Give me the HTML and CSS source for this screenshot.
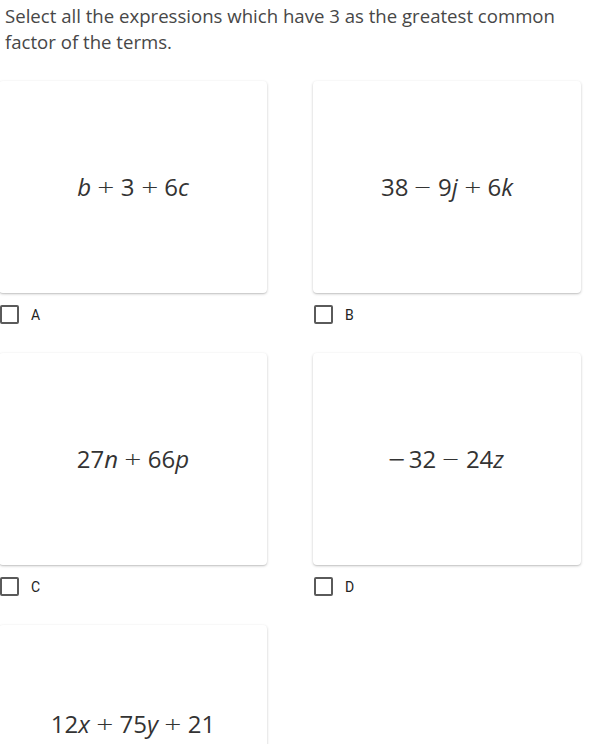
FILE: index.html
```html
<!DOCTYPE html>
<html>
<head>
<meta charset="utf-8">
<link rel="stylesheet" href="styles.css">
</head>
<body>
<div class="page">
  <p class="prompt">Select all the expressions which have 3 as the greatest common factor of the terms.</p>
  <div class="choices">
    <div class="choice">
      <div class="card"><span class="math"><i>b</i><span class="op">+</span>3<span class="op">+</span>6<i>c</i></span></div>
      <label class="opt"><span class="box"></span><span class="letter">A</span></label>
    </div>
    <div class="choice">
      <div class="card"><span class="math">38<span class="op">−</span>9<i>j</i><span class="op">+</span>6<i>k</i></span></div>
      <label class="opt"><span class="box"></span><span class="letter">B</span></label>
    </div>
    <div class="choice">
      <div class="card"><span class="math">27<i>n</i><span class="op">+</span>66<i>p</i></span></div>
      <label class="opt"><span class="box"></span><span class="letter">C</span></label>
    </div>
    <div class="choice">
      <div class="card"><span class="math"><span class="neg">−</span>32<span class="op">−</span>24<i>z</i></span></div>
      <label class="opt"><span class="box"></span><span class="letter">D</span></label>
    </div>
    <div class="choice">
      <div class="card card-last"><span class="math">12<i>x</i><span class="op">+</span>75<i>y</i><span class="op">+</span>21</span></div>
      <label class="opt"><span class="box"></span><span class="letter">E</span></label>
    </div>
  </div>
</div>
</body>
</html>
```
FILE: styles.css
```css
html, body {
  margin: 0;
  padding: 0;
  background: #fff;
}
.page {
  width: 596px;
  height: 744px;
  overflow: hidden;
}
.prompt {
  margin: 0;
  padding: 3px 20px 0 5px;
  font-family: "Open Sans", sans-serif;
  font-size: 18.6px;
  line-height: 26px;
  color: #474747;
}
.choices {
  display: grid;
  grid-template-columns: 268px 268px;
  column-gap: 46px;
  row-gap: 29px;
  margin-top: 26px;
  margin-left: -1px;
}
.choice {
  display: flex;
  flex-direction: column;
}
.card {
  height: 212px;
  border-radius: 4px;
  background: #fff;
  box-shadow: 0 1px 3px rgba(0,0,0,0.2), 0 1px 1px rgba(0,0,0,0.08);
  display: flex;
  align-items: center;
  justify-content: center;
}
.card-last {
  height: 200px;
  align-items: flex-start;
  padding-top: 84px;
  box-sizing: border-box;
}
.math {
  font-family: "Open Sans", sans-serif;
  font-size: 24px;
  line-height: 30px;
  color: #333;
  white-space: nowrap;
}
.math i {
  font-style: italic;
}
.op {
  display: inline-block;
  margin: 0 8px;
  font-weight: 300;
  transform: scaleX(1.25);
}
.neg {
  display: inline-block;
  margin-right: 5px;
  transform: scaleX(1.25);
}
.opt {
  display: flex;
  align-items: center;
  margin-top: 12px;
  height: 19px;
}
.box {
  box-sizing: border-box;
  width: 19px;
  height: 19px;
  border: 2px solid #5a5a5a;
  border-radius: 2px;
  margin-left: 1px;
}
.letter {
  margin-left: 12px;
  font-family: Roboto, sans-serif;
  font-size: 14px;
  color: #222;
}
```
